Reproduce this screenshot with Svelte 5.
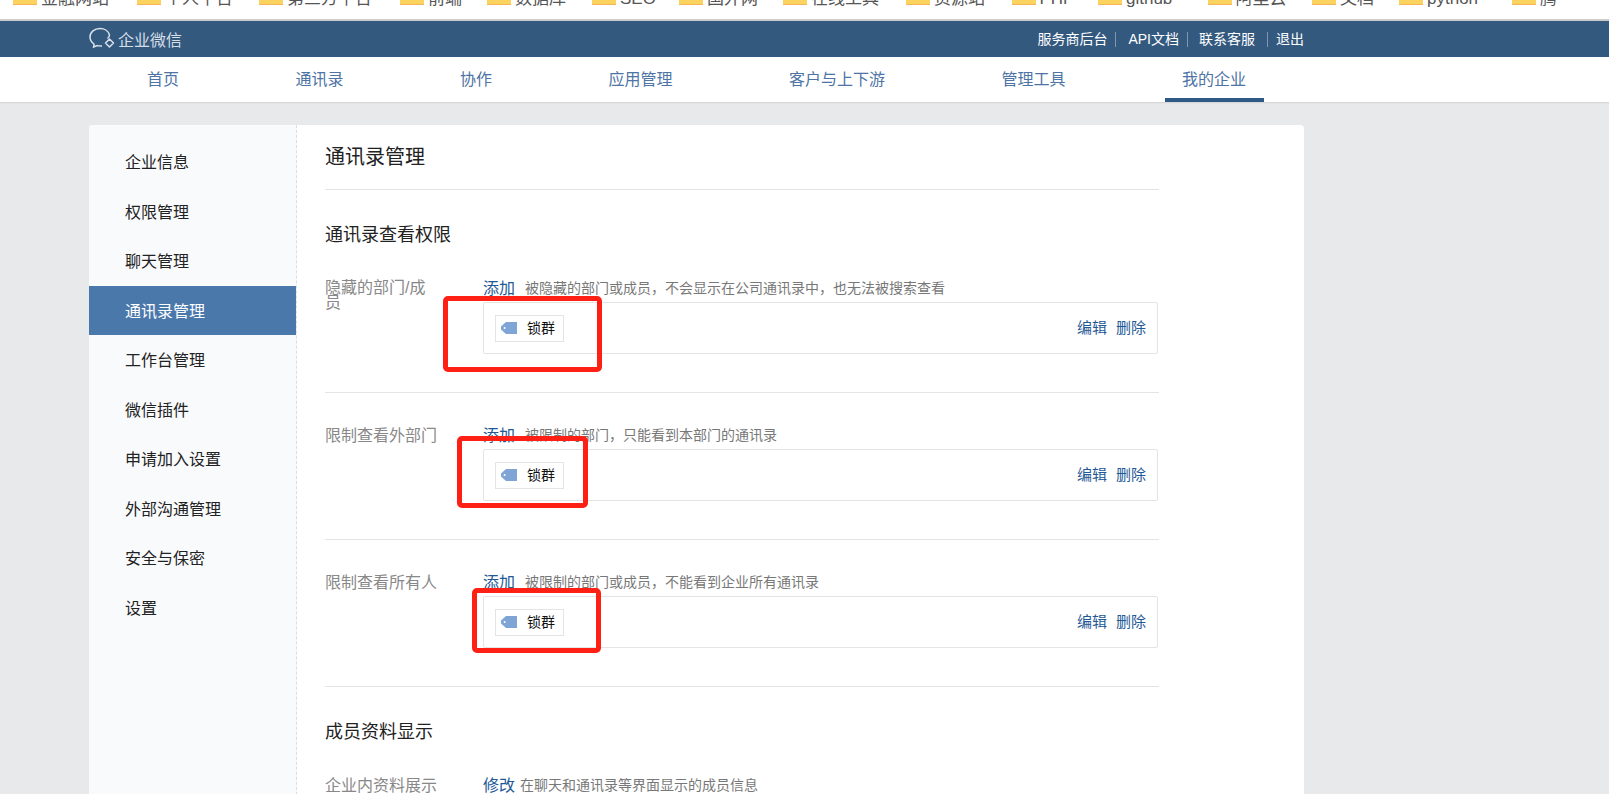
<script>
  // bookmark bar items, w is the slot width so the folders land where they do in the browser
  const bookmarks = [
    { name: '金融网站', w: 124 },
    { name: '个人平台', w: 122 },
    { name: '第三方平台', w: 141 },
    { name: '前端', w: 87 },
    { name: '数据库', w: 105 },
    { name: 'SEO', w: 87 },
    { name: '国外网', w: 104 },
    { name: '在线工具', w: 123 },
    { name: '资源站', w: 105.5 },
    { name: 'PHP', w: 86.5 },
    { name: 'github', w: 109.5 },
    { name: '阿里云', w: 104.5 },
    { name: '文档', w: 87 },
    { name: 'python', w: 113 },
    { name: '腾', w: 60 }
  ];

  const links = ['服务商后台', 'API文档', '联系客服', '退出'];
  const tabs = ['首页', '通讯录', '协作', '应用管理', '客户与上下游', '管理工具', '我的企业'];
  const menu = ['企业信息', '权限管理', '聊天管理', '通讯录管理', '工作台管理', '微信插件', '申请加入设置', '外部沟通管理', '安全与保密', '设置'];

  const rows = [
    { label: '隐藏的部门/成员', hint: '被隐藏的部门或成员，不会显示在公司通讯录中，也无法被搜索查看' },
    { label: '限制查看外部门', hint: '被限制的部门，只能看到本部门的通讯录' },
    { label: '限制查看所有人', hint: '被限制的部门或成员，不能看到企业所有通讯录' }
  ];
</script>

<div class="page">
  <div class="bookmarks">
    {#each bookmarks as b}
      <div class="bookmark" style="width: {b.w}px">
        <span class="folder"></span>
        <span class="bookmark-name">{b.name}</span>
      </div>
    {/each}
  </div>

  <header class="topbar">
    <div class="topbar-inner">
      <div class="logo">
        <svg width="26" height="24" viewBox="0 0 26 24" fill="none" stroke="#d9e1ea" stroke-width="1.5">
          <path d="M18.5 11.5C20 10.5 20.5 9 20.5 8 C19.5 4 15.5 1.5 11 1.5 C5.5 1.5 1 5 1 10 C1 13 2.6 15.4 5 17 L4.6 20 L8.2 18.6 C9.6 19 11 19.1 13 19" />
          <path d="M20.5 12 L24.5 16 L20.5 20 L16.5 16 Z" stroke-linejoin="round" />
        </svg>
        <span>企业微信</span>
      </div>
      <nav class="links">
        {#each links as link}
          <a href="#top" class="link">{link}</a>
        {/each}
      </nav>
    </div>
  </header>

  <nav class="tabs">
    {#each tabs as tab}
      <a href="#top" class="tab" class:on={tab === '我的企业'}>{tab}</a>
    {/each}
  </nav>

  <div class="card">
    <aside class="side">
      {#each menu as item}
        <div class="side-item" class:active={item === '通讯录管理'}>{item}</div>
      {/each}
    </aside>

    <main class="content">
      <h1 class="title">通讯录管理</h1>

      <h2 class="head">通讯录查看权限</h2>
      {#each rows as row}
        <section class="row">
          <div class="label">{row.label}</div>
          <div class="value">
            <div class="value-top">
              <a href="#top" class="action">添加</a>
              <span class="hint">{row.hint}</span>
            </div>
            <div class="box">
              <div class="tag">
                <svg width="16" height="12" viewBox="0 0 16 12">
                  <path d="M5 0H16V12H5L0 7.5V4.5Z" fill="#7fa5d6" />
                  <circle cx="3.6" cy="6" r="1" fill="#fff" />
                </svg>
                <span class="tag-name">锁群</span>
              </div>
              <div class="ops">
                <a href="#top">编辑</a>
                <a href="#top">删除</a>
              </div>
            </div>
          </div>
        </section>
      {/each}

      <h2 class="head">成员资料显示</h2>
      <section class="row last">
        <div class="label">企业内资料展示</div>
        <div class="value">
          <div class="value-top">
            <a href="#top" class="action">修改</a>
            <span class="hint near">在聊天和通讯录等界面显示的成员信息</span>
          </div>
        </div>
      </section>
    </main>
  </div>

  <!-- red marks someone drew on the screenshot -->
  <div class="mark mark-a"></div>
  <div class="mark mark-b"></div>
  <div class="mark mark-c"></div>
</div>

<style>
  :global(body) {
    margin: 0;
    background: #e8e9eb;
  }

  .page {
    position: relative;
    height: 794px;
    overflow: hidden;
    background: #e8e9eb;
    font-family: "Liberation Sans", "Noto Sans CJK SC", sans-serif;
  }

  a {
    text-decoration: none;
    color: inherit;
  }

  .bookmarks {
    display: flex;
    height: 19px;
    padding-left: 13px;
    overflow: hidden;
    background: #fff;
    border-bottom: 2px solid #cbcbcb;
  }

  .bookmark {
    display: flex;
    flex-shrink: 0;
    align-items: flex-end;
    gap: 4px;
    height: 5px;
    font-size: 17px;
    line-height: 22px;
    color: #555;
  }

  .folder {
    flex-shrink: 0;
    width: 24px;
    height: 5px;
    background: #fdd35f;
    border-bottom: 1px solid #f5b455;
    box-sizing: border-box;
  }

  .bookmark-name {
    flex-shrink: 0;
    margin-bottom: -5px;
  }

  .topbar {
    height: 36px;
    background: #34597f;
  }

  .topbar-inner {
    display: flex;
    align-items: center;
    justify-content: space-between;
    box-sizing: border-box;
    width: 1215px;
    height: 100%;
    margin-left: 89px;
  }

  .logo {
    display: flex;
    align-items: center;
    gap: 3px;
    font-size: 16px;
    color: #d5dde6;
  }

  .links {
    display: flex;
    font-size: 14px;
    color: #fff;
  }

  .link {
    padding-right: 8px;
    margin-right: 12px;
    line-height: 15px;
    border-right: 1px solid #7f97b3;
  }

  .link:last-child {
    padding-right: 0;
    margin-right: 0;
    border-right: none;
  }

  .link:nth-child(2) {
    margin-right: 11px;
  }

  .link:nth-child(3) {
    padding-right: 12px;
    margin-right: 8px;
  }

  .tabs {
    display: flex;
    gap: 81.5px;
    height: 45px;
    padding-left: 129.5px;
    background: #fff;
    box-shadow: 0 1px 1px #d6d7d9;
  }

  .tab {
    box-sizing: border-box;
    height: 45px;
    padding: 0 17.5px;
    font-size: 16px;
    line-height: 46px;
    color: #4d74a4;
  }

  .tab.on {
    border-bottom: 4px solid #2f5a87;
  }

  .card {
    display: flex;
    width: 1215px;
    height: 700px;
    margin: 23px 0 0 89px;
    overflow: hidden;
    background: #fff;
    border-radius: 4px 4px 0 0;
  }

  .side {
    flex-shrink: 0;
    box-sizing: border-box;
    width: 208px;
    padding-top: 12px;
    background: #f9fafc;
    border-right: 1px dashed #d9dde6;
  }

  .side-item {
    height: 49.5px;
    padding-left: 36px;
    font-size: 16px;
    line-height: 51px;
    color: #222;
  }

  .side-item.active {
    color: #fff;
    background: #4b78ab;
  }

  .content {
    width: 834px;
    margin-left: 28px;
  }

  .title {
    height: 64px;
    margin: 0;
    font-size: 20px;
    font-weight: 400;
    line-height: 64px;
    color: #222;
    border-bottom: 1px solid #e3e4e8;
  }

  .head {
    margin: 32px 0 29px;
    font-size: 18px;
    font-weight: 400;
    line-height: 26px;
    color: #222;
  }

  .row {
    display: flex;
    box-sizing: border-box;
    height: 116px;
    border-bottom: 1px solid #e3e4e8;
  }

  .row ~ .row {
    height: 147px;
    padding-top: 31px;
  }

  .row.last {
    height: auto;
    padding-top: 0;
    border-bottom: none;
  }

  .label {
    flex-shrink: 0;
    width: 115px;
    margin: 3px 43px 0 0;
    font-size: 16px;
    line-height: 15px;
    color: #888;
  }

  .row ~ .row .label {
    margin-top: 4px;
  }

  .value {
    flex: 1;
  }

  .value-top {
    display: flex;
    align-items: center;
    height: 22px;
    margin-top: -1px;
  }

  .action {
    font-size: 16px;
    color: #1f5a96;
  }

  .hint {
    margin-left: 10px;
    font-size: 14px;
    color: #787878;
  }

  .hint.near {
    margin-left: 5px;
  }

  .box {
    display: flex;
    align-items: center;
    justify-content: space-between;
    box-sizing: border-box;
    width: 675px;
    height: 52px;
    padding: 0 11px;
    margin-top: 4px;
    border: 1px solid #e3e4e8;
    border-radius: 2px;
  }

  .tag {
    display: flex;
    align-items: center;
    gap: 10px;
    box-sizing: border-box;
    width: 69px;
    height: 27px;
    padding-left: 5px;
    font-size: 14px;
    color: #111;
    border: 1px solid #e3e4e8;
  }

  .tag-name {
    margin-top: -2px;
  }

  .ops {
    display: flex;
    gap: 9px;
    margin-top: -4px;
    font-size: 15px;
    color: #1f5a96;
  }

  .mark {
    position: absolute;
    box-sizing: border-box;
    border: 5px solid #fe2015;
    border-radius: 5px;
  }

  .mark-a {
    top: 296px;
    left: 443px;
    width: 159px;
    height: 76px;
  }

  .mark-b {
    top: 436px;
    left: 457px;
    width: 131px;
    height: 72px;
  }

  .mark-c {
    top: 588px;
    left: 472px;
    width: 129px;
    height: 65px;
  }
</style>
